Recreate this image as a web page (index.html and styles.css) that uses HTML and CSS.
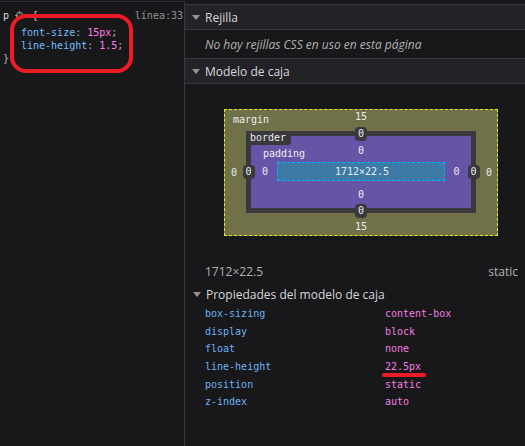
FILE: index.html
```html
<!DOCTYPE html>
<html lang="es">
<head>
<meta charset="utf-8">
<title>Inspector</title>
<link rel="stylesheet" href="styles.css">
</head>
<body>
<div class="app">
  <section class="rules">
    <div class="rule">
      <div class="rule-head">
        <span class="sel">p</span>
        <svg class="hl-icon" width="9" height="9" viewBox="0 0 9 9"><circle cx="4.5" cy="4.5" r="3" fill="none" stroke="#8f8f93" stroke-width="1.2"/><path d="M4.5 0v3M4.5 6v3M0 4.5h3M6 4.5h3" stroke="#8f8f93" stroke-width="1.2"/></svg>
        <span class="brace">{</span>
        <span class="src">línea:33</span>
      </div>
      <div class="decl"><span class="pn">font-size</span><span class="pc">: </span><span class="pv">15px</span><span class="pc">;</span></div>
      <div class="decl"><span class="pn">line-height</span><span class="pc">: </span><span class="pv">1.5</span><span class="pc">;</span></div>
      <div class="rule-end">}</div>
      <div class="ring"></div>
    </div>
  </section>
  <section class="side">
    <div class="acc-head"><span class="tri"></span>Rejilla</div>
    <div class="note">No hay rejillas CSS en uso en esta página</div>
    <div class="acc-head"><span class="tri"></span>Modelo de caja</div>
    <div class="bm-wrap">
      <div class="bm-margin">
        <span class="bm-label lbl-margin">margin</span>
        <span class="v m-top">15</span>
        <span class="v m-left">0</span>
        <div class="bm-border">
          <span class="lbl-border">border</span>
          <span class="badge b-top">0</span>
          <span class="badge b-left">0</span>
          <div class="bm-padding">
            <span class="bm-label lbl-padding">padding</span>
            <span class="v p-top">0</span>
            <span class="v p-left">0</span>
            <div class="bm-content">1712×22.5</div>
            <span class="v p-right">0</span>
            <span class="v p-bottom">0</span>
          </div>
          <span class="badge b-right">0</span>
          <span class="badge b-bottom">0</span>
        </div>
        <span class="v m-right">0</span>
        <span class="v m-bottom">15</span>
      </div>
    </div>
    <div class="dims"><span>1712×22.5</span><span>static</span></div>
    <div class="sub-head"><span class="tri"></span>Propiedades del modelo de caja</div>
    <div class="props">
      <div class="prop"><span class="k">box-sizing</span><span class="val">content-box</span></div>
      <div class="prop"><span class="k">display</span><span class="val">block</span></div>
      <div class="prop"><span class="k">float</span><span class="val">none</span></div>
      <div class="prop"><span class="k">line-height</span><span class="val marked">22.5px<span class="underline"></span></span></div>
      <div class="prop"><span class="k">position</span><span class="val">static</span></div>
      <div class="prop"><span class="k">z-index</span><span class="val">auto</span></div>
    </div>
  </section>
</div>
</body>
</html>
```
FILE: styles.css
```css
html, body {
  margin: 0;
  padding: 0;
  background: #18181a;
}
body {
  width: 525px;
  height: 446px;
  overflow: hidden;
  font-family: "Open Sans", "Noto Sans", sans-serif;
  color: #d7d7db;
}
.app {
  display: flex;
  height: 446px;
}

/* left: rule view */
.rules {
  width: 184px;
  border-right: 1px solid #38383d;
  border-top: 1px solid #2e2e33;
  margin-top: 1px;
  font-family: "DejaVu Sans Mono", monospace;
  font-size: 10px;
}
.rule {
  position: relative;
  padding-top: 7px;
}
.rule-head {
  display: flex;
  align-items: center;
  height: 13px;
  padding-left: 3px;
  color: #d7d7db;
}
.hl-icon { margin-left: 6px; }
.brace { margin-left: 8px; }
.src {
  margin-left: auto;
  margin-right: 1px;
  color: #8f8f93;
}
.decl {
  height: 13px;
  line-height: 13px;
  padding-left: 21px;
}
.rule-head + .decl { margin-top: 4px; }
.pn { color: #75bfff; }
.pc { color: #b1b1b3; }
.pv { color: #ff7de9; }
.rule-end {
  height: 13px;
  line-height: 13px;
  padding-left: 3px;
  color: #b1b1b3;
}
.ring {
  position: absolute;
  left: 10px;
  top: 12px;
  width: 115px;
  height: 51px;
  border: 4px solid #ed1c24;
  border-radius: 16px;
}

/* right: layout sidebar */
.side {
  flex: 1;
  display: flex;
  flex-direction: column;
  padding-top: 4px;
  font-size: 12px;
}
.acc-head {
  height: 24px;
  display: flex;
  align-items: center;
  background: #232327;
  border-top: 1px solid #38383d;
  border-bottom: 1px solid #38383d;
  color: #d7d7db;
  padding-left: 7px;
}
.tri {
  width: 0;
  height: 0;
  border-left: 4px solid transparent;
  border-right: 4px solid transparent;
  border-top: 5px solid #939395;
  margin-right: 5px;
}
.note {
  height: 28px;
  display: flex;
  align-items: center;
  padding-left: 20px;
  font-style: italic;
  color: #b1b1b3;
}

/* box model diagram */
.bm-wrap {
  padding: 25px 0 0 39px;
  height: 152px;
}
.bm-margin {
  position: relative;
  width: 272px;
  height: 125px;
  border: 1px dashed #e6e62a;
  background: #707149;
  display: grid;
  grid-template-columns: 21px 1fr 21px;
  grid-template-rows: 21px 1fr 22px;
  font-family: "DejaVu Sans Mono", monospace;
  font-size: 10px;
  color: #ececec;
}
.v {
  display: flex;
  align-items: center;
  justify-content: center;
}
.m-top { grid-column: 2; grid-row: 1; align-items: flex-start; padding-top: 1px; }
.m-left { grid-column: 1; grid-row: 2; padding-right: 3px; }
.m-right { grid-column: 3; grid-row: 2; padding-left: 5px; }
.m-bottom { grid-column: 2; grid-row: 3; align-items: flex-end; padding-bottom: 3px; }

.bm-label {
  position: absolute;
  line-height: 12px;
}
.lbl-margin { left: 8px; top: 4px; }

.bm-border {
  grid-column: 2;
  grid-row: 2;
  position: relative;
  background: #38383d;
  display: grid;
  grid-template-columns: 5px 1fr 5px;
  grid-template-rows: 5px 1fr 5px;
}
.lbl-border {
  position: absolute;
  left: 0;
  top: 0;
  height: 14px;
  line-height: 14px;
  padding: 0 5px 0 4px;
  background: #38383d;
  border-bottom-right-radius: 3px;
  z-index: 2;
}
.badge {
  position: relative;
  z-index: 2;
  isolation: isolate;
  display: flex;
  align-items: center;
  justify-content: center;
  line-height: 14px;
  color: #ececec;
}
.badge::after {
  content: "";
  position: absolute;
  width: 12px;
  height: 14px;
  left: 50%;
  top: 50%;
  margin-left: -6px;
  margin-top: -7px;
  background: #38383d;
  border-radius: 4px;
  z-index: -1;
}
.b-top { grid-column: 2; grid-row: 1; height: 5px; }
.b-left { grid-column: 1; grid-row: 2; width: 5px; }
.b-right { grid-column: 3; grid-row: 2; width: 5px; }
.b-bottom { grid-column: 2; grid-row: 3; height: 5px; }

.bm-padding {
  grid-column: 2;
  grid-row: 2;
  position: relative;
  background: #6655a7;
  display: grid;
  grid-template-columns: 26px 1fr 26px;
  grid-template-rows: 26px 19px 27px;
}
.lbl-padding { left: 12px; top: 12px; }
.p-top { grid-column: 2; grid-row: 1; padding-top: 2px; }
.p-left { grid-column: 1; grid-row: 2; padding-left: 2px; }
.p-right { grid-column: 3; grid-row: 2; padding-right: 3px; }
.p-bottom { grid-column: 2; grid-row: 3; }
.bm-content {
  grid-column: 2;
  grid-row: 2;
  border: 1px dashed #00b4ff;
  background: #3d7aa5;
  display: flex;
  align-items: center;
  justify-content: center;
  padding-left: 2px;
}

.dims {
  display: flex;
  justify-content: space-between;
  padding: 0 7px 0 20px;
  height: 22px;
  line-height: 22px;
  color: #b1b1b3;
}
.sub-head {
  height: 22px;
  display: flex;
  align-items: center;
  padding-left: 8px;
  color: #d7d7db;
}
.props {
  padding-top: 0;
  font-family: "DejaVu Sans Mono", monospace;
  font-size: 10px;
}
.prop {
  display: flex;
  height: 17.7px;
  line-height: 17.7px;
  padding-left: 20px;
}
.k {
  width: 180px;
  color: #6db2f2;
}
.val {
  color: #f17ee0;
}
.marked {
  position: relative;
}
.underline {
  position: absolute;
  left: -3px;
  width: 44px;
  top: 15px;
  height: 4px;
  border-radius: 2px;
  background: #ed1c24;
}
```
